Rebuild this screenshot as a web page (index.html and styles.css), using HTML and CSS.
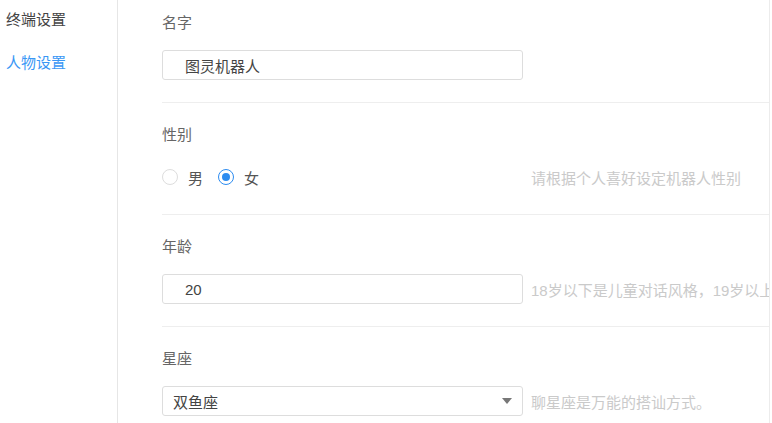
FILE: index.html
```html
<!DOCTYPE html>
<html>
  <head>
    <title>人物设置</title>
    <meta charset="UTF-8">
    <link rel="stylesheet" href="styles.css">
  </head>
  <body>
    <div class="page">
      <ul class="menu">
        <li>终端设置</li>
        <li class="active">人物设置</li>
      </ul>
      <div class="main">
        <div class="section">
          <div class="label">名字</div>
          <div class="row">
            <input class="field" type="text" value="图灵机器人">
          </div>
        </div>
        <div class="section">
          <div class="label">性别</div>
          <div class="row">
            <div class="control radios">
              <label class="radio"><span class="dot"></span>男</label>
              <label class="radio checked"><span class="dot"></span>女</label>
            </div>
            <span class="hint">请根据个人喜好设定机器人性别</span>
          </div>
        </div>
        <div class="section">
          <div class="label">年龄</div>
          <div class="row">
            <input class="field" type="text" value="20">
            <span class="hint">18岁以下是儿童对话风格，19岁以上是成人对话风格。</span>
          </div>
        </div>
        <div class="section">
          <div class="label">星座</div>
          <div class="row">
            <div class="select">双鱼座<span class="arrow"></span></div>
            <span class="hint">聊星座是万能的搭讪方式。</span>
          </div>
        </div>
      </div>
    </div>
  </body>
</html>
```

FILE: styles.css
```css
html, body {
  margin: 0;
  height: 100%;
  background: #fff;
  overflow: hidden;
}
body {
  font-family: "Liberation Sans", "Noto Sans CJK SC", sans-serif;
  font-size: 15px;
  color: #333;
}
.page {
  display: flex;
  height: 100%;
  width: 770px;
}
.menu {
  list-style: none;
  margin: 0;
  padding: 0 0 0 6px;
  width: 111px;
  border-right: 1px solid #e6e6e6;
}
.menu li {
  height: 43px;
  line-height: 43px;
  color: #444;
}
.menu li:first-child {
  margin-top: -2px;
}
.menu li.active {
  color: #3a97f5;
}
.main {
  flex: 1;
  padding-left: 44px;
  border-right: 1px solid #ececec;
  overflow: hidden;
}
.section {
  padding: 22px 0;
  border-bottom: 1px solid #eee;
}
.section:first-child {
  margin-top: -9px;
}
.label {
  line-height: 20px;
  color: #666;
  margin-bottom: 17px;
}
.row {
  display: flex;
  align-items: center;
  height: 30px;
  white-space: nowrap;
}
.field, .control, .select {
  box-sizing: border-box;
  width: 361px;
  height: 30px;
  flex: none;
}
.field {
  border: 1px solid #ddd;
  border-radius: 3px;
  padding: 0 0 0 22px;
  font: inherit;
  color: #444;
  outline: none;
}
.radios {
  display: flex;
  align-items: center;
}
.radio {
  display: flex;
  align-items: center;
  margin-right: 15px;
  color: #555;
}
.dot {
  box-sizing: border-box;
  width: 16px;
  height: 16px;
  border: 1px solid #ddd;
  border-radius: 50%;
  margin-right: 10px;
  position: relative;
}
.radio.checked .dot {
  border-color: #2d8cf0;
}
.radio.checked .dot::after {
  content: '';
  position: absolute;
  top: 3px;
  left: 3px;
  width: 8px;
  height: 8px;
  border-radius: 50%;
  background: #2d8cf0;
}
.select {
  display: flex;
  align-items: center;
  border: 1px solid #ddd;
  border-radius: 3px;
  padding: 0 10px 0 10px;
  color: #444;
}
.arrow {
  margin-left: auto;
  width: 0;
  height: 0;
  border-left: 5px solid transparent;
  border-right: 5px solid transparent;
  border-top: 6px solid #777;
}
.hint {
  margin-left: 8px;
  color: #cacaca;
}
```
